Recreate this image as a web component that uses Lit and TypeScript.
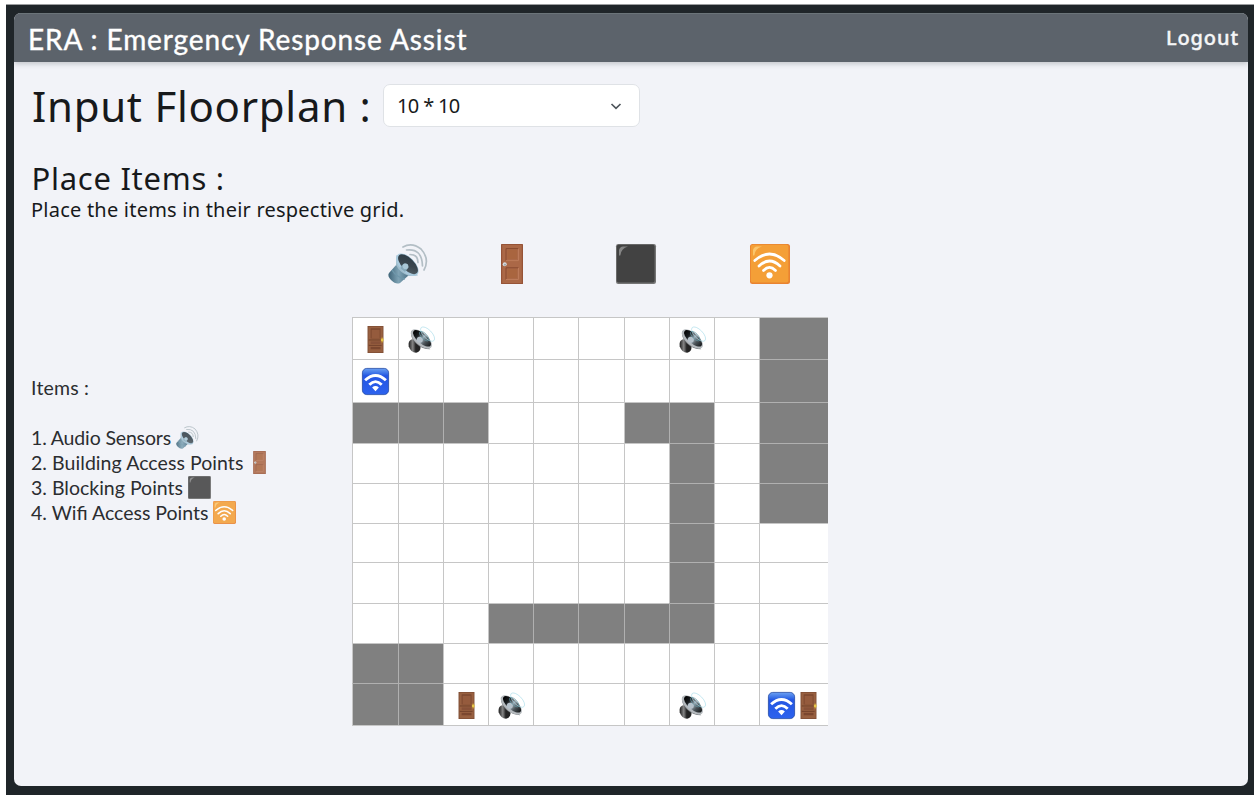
import { LitElement, html, css, svg, nothing } from "lit";
import { customElement, property } from "lit/decorators.js";

type IconName = "speaker" | "door" | "block" | "wifi" | "speakerDark" | "doorDark" | "wifiBlue";

const icons = {
  speaker: svg`
    <defs>
      <linearGradient id="cone" x1="0" y1="0" x2="1" y2="1"><stop offset="0" stop-color="#2b3a44"/><stop offset=".55" stop-color="#3a464e"/><stop offset="1" stop-color="#56636b"/></linearGradient>
      <linearGradient id="base" x1="0" y1="0" x2="1" y2="0"><stop offset="0" stop-color="#3f6478"/><stop offset=".5" stop-color="#7fa3b5"/><stop offset="1" stop-color="#4b7085"/></linearGradient>
    </defs>
    <path d="M9 20 L1 29 Q-1 32 3 36 Q8 41 12 39 L21 31Z" fill="url(#base)"/>
    <path d="M8.500 11 L8 21 Q12 29 21 32 L30 31.500Z" fill="#9fbccb"/>
    <path d="M4 26 Q8 33 17 35" fill="none" stroke="#6f97aa" stroke-width="1.500"/>
    <ellipse cx="19.300" cy="20.800" rx="14" ry="7.600" transform="rotate(45 19.300 20.800)" fill="#a9cade"/>
    <ellipse cx="20" cy="20.200" rx="12.600" ry="6.100" transform="rotate(45 20 20.200)" fill="url(#cone)"/>
    <path d="M13 25 Q11 23 16 19.500 Q20 19 20.500 23.500 L17 28Z" fill="#88aabb"/>
    <circle cx="17.500" cy="22.300" r="2.800" fill="#a9c7d6"/>
    <g fill="none" stroke="#b3bec5" stroke-width="1.700" stroke-linecap="round">
      <path d="M22 10.500 Q30 10.500 30 18.500"/><path d="M18.500 6 Q34 4 34.500 22"/><path d="M15 3 Q24 -2 33 5 Q42 15 36 26"/>
    </g>`,
  door: svg`
    <rect x="9" y="0" width="22" height="40" rx=".6" fill="#965337"/>
    <rect x="10.200" y="1" width="19.600" height="38" fill="#ab6847"/>
    <path d="M14 16.600V4.600H26.500" fill="none" stroke="#88492f" stroke-width="1"/>
    <path d="M14 16.600H26.500V4.600" fill="none" stroke="#bd7b5a" stroke-width="1"/>
    <rect x="15.500" y="6" width="9.500" height="9" fill="#a9653f"/>
    <path d="M14 35.500V23.800H26.500" fill="none" stroke="#88492f" stroke-width="1"/>
    <path d="M14 35.500H26.500V23.800" fill="none" stroke="#bd7b5a" stroke-width="1"/>
    <rect x="15.500" y="25.300" width="9.500" height="8.700" fill="#a9653f"/>
    <circle cx="12.700" cy="20.200" r="2" fill="#d5dadd"/><circle cx="13" cy="20.700" r="1" fill="#9da6aa"/>`,
  block: svg`
    <rect width="40" height="40" rx="2.200" fill="#757575"/>
    <rect x=".8" y=".8" width="37.800" height="37.800" rx="1.800" fill="#424242"/>
    <path d="M3 11.500V6Q4 2.500 7 2.500H12Q5 4.500 4.300 11.500Z" fill="#858585"/>`,
  wifi: svg`
    <rect width="40" height="40" rx="2.500" fill="#e98331"/>
    <rect x=".8" y=".8" width="37.600" height="37.600" rx="2" fill="#f49f37"/>
    <path d="M3 11.500V6Q4 2.500 7 2.500H12Q5 4.500 4.300 11.500Z" fill="#fbc56b"/>
    <g fill="none" stroke="#fff" stroke-width="2.700" stroke-linecap="round">
      <path d="M4.800 16.500Q19.500 3.500 34.200 16.500"/><path d="M9 22Q19.500 12 30 22"/><path d="M13.500 26.500Q19.500 20.500 25.500 26.500"/>
    </g>
    <circle cx="19.500" cy="31.300" r="3.100" fill="#fff"/>`,
  speakerDark: svg`
    <defs>
      <linearGradient id="darkCone" x1="0" y1="0" x2="1" y2="0"><stop offset="0" stop-color="#000"/><stop offset=".28" stop-color="#1b1f22"/><stop offset=".52" stop-color="#98a6b0"/><stop offset=".72" stop-color="#4b5358"/><stop offset="1" stop-color="#16191b"/></linearGradient>
      <linearGradient id="darkBase" x1="0" y1="0" x2="1" y2="0"><stop offset="0" stop-color="#1c1c1c"/><stop offset=".35" stop-color="#858585"/><stop offset=".6" stop-color="#242424"/><stop offset="1" stop-color="#222"/></linearGradient>
    </defs>
    <path d="M5 20 Q0 22 1 30 Q4 39 12 39.500 Q19 38 18.500 31 L10 19Z" fill="url(#darkBase)"/>
    <path d="M4.500 7 Q3 17 11 25 Q20 34 33 34.500Z" fill="#6d7275"/>
    <ellipse cx="19.800" cy="19.300" rx="19" ry="9.300" transform="rotate(41 19.800 19.300)" fill="#b4b9bd"/>
    <ellipse cx="20.800" cy="18.300" rx="16.600" ry="7.200" transform="rotate(41 20.800 18.300)" fill="url(#darkCone)"/>
    <circle cx="17.500" cy="20.500" r="4.500" fill="#b5c1ca"/>
    <g fill="none" stroke="#b0dfec" stroke-width="1"><ellipse cx="29" cy="12" rx="13.500" ry="6.300" transform="rotate(46 29 12)"/><ellipse cx="24" cy="15" rx="9" ry="4" transform="rotate(46 24 15)" stroke="#6198a6"/></g>`,
  doorDark: svg`
    <rect x="8.200" y="0" width="23.600" height="40" fill="#7d4c33"/>
    <rect x="9.500" y="1" width="21.200" height="38" fill="#986040"/>
    <rect x="12.800" y="3.400" width="14.600" height="15" fill="#7b472f"/><rect x="14.200" y="5.500" width="12" height="12.900" fill="#955b3d"/>
    <path d="M10 20.700H28M10 28.700H29" stroke="#6b3d28" stroke-width="1.300"/>
    <rect x="12.800" y="22.800" width="14.600" height="3.800" fill="#875138"/>
    <rect x="12.800" y="31" width="14.600" height="3.500" fill="#7b472f"/>
    <rect x="28.800" y="17" width="2" height="7.500" fill="#c49431"/><circle cx="30" cy="20.800" r="2.200" fill="#e5c64c"/>`,
  wifiBlue: svg`
    <defs><linearGradient id="blue" x1="0" y1="0" x2="0" y2="1"><stop offset="0" stop-color="#6ba0f2"/><stop offset=".18" stop-color="#3d74e8"/><stop offset=".28" stop-color="#2456e3"/><stop offset="1" stop-color="#2c62ee"/></linearGradient></defs>
    <rect x=".6" y=".6" width="38.800" height="38.800" rx="6.500" fill="url(#blue)" stroke="#234aa6" stroke-width="1.200"/>
    <g fill="none" stroke="#fff" stroke-width="4.200">
      <path d="M4.600 18.200Q20 3.800 35.400 18.200"/><path d="M10.800 24.800Q20 15.500 29.200 24.800"/>
    </g>
    <path d="M15 28.800Q20 24.500 25 28.800L20 34.400Z" fill="#fff"/>`,
};

@customElement("era-icon")
export class EraIcon extends LitElement {
  @property() name: IconName = "door";
  static styles = css`
    :host { display: block; flex: none; }
    svg { display: block; width: 100%; height: 100%; overflow: visible; }
  `;
  render() {
    return html`<svg viewBox="0 0 40 40" aria-hidden="true">${icons[this.name]}</svg>`;
  }
}

const plan = [
  "DS.....S.#",
  "W........#",
  "###...##.#",
  ".......#.#",
  ".......#.#",
  ".......#..",
  ".......#..",
  "...#####..",
  "##........",
  "##DS...S.B",
];

const contents: Record<string, IconName[]> = {
  D: ["doorDark"],
  S: ["speakerDark"],
  W: ["wifiBlue"],
  B: ["wifiBlue", "doorDark"],
};

@customElement("floor-grid")
export class FloorGrid extends LitElement {
  static styles = css`
    :host {
      display: grid;
      width: 476px;
      grid-template-columns: 46px 45px 45px 45px 45px 46px 45px 45px 45px 69px;
      grid-template-rows: 42px 43px 41px 40px 40px 39px 41px 40px 40px 42px;
      border-bottom: 1px solid #c6c6c6;
    }
    .cell {
      display: flex;
      align-items: center;
      justify-content: center;
      background: #fff;
      border-left: 1px solid #c6c6c6;
      border-top: 1px solid #c6c6c6;
    }
    .blocked { background: #808080; }
    .blocked.left { border-left-color: #b0b0b0; }
    .blocked.above { border-top-color: #b0b0b0; }
    .icon { width: 27px; height: 27px; margin-top: 1px; }
    .pair { margin-left: -3px; }
    .slim { margin-right: -5px; }
  `;
  render() {
    return plan.map((row, r) =>
      [...row].map((c, i) => {
        const blocked = c === "#";
        const cls = [
          "cell",
          blocked ? "blocked" : "",
          blocked && row[i - 1] === "#" ? "left" : "",
          blocked && plan[r - 1]?.[i] === "#" ? "above" : "",
        ].join(" ");
        const items = contents[c];
        return html`<div class=${cls}>${items
          ? items.map((n, k) => html`<era-icon class=${k > 0 ? "icon slim" : items.length > 1 ? "icon pair" : "icon"} name=${n}></era-icon>`)
          : nothing}</div>`;
      })
    );
  }
}

const legend: { text: string; icon: IconName; cls: string }[] = [
  { text: "1. Audio Sensors", icon: "speaker", cls: "audio" },
  { text: "2. Building Access Points", icon: "door", cls: "access" },
  { text: "3. Blocking Points", icon: "block", cls: "blocking" },
  { text: "4. Wifi Access Points", icon: "wifi", cls: "wireless" },
];

@customElement("app-root")
export class AppRoot extends LitElement {
  static styles = css`
    :host {
      display: block;
      box-sizing: border-box;
      height: 796px;
      padding: 4px 4px 1px 6px;
      background: #fff;
      color: #17191b;
      font-family: "Noto Sans", sans-serif;
    }
    * { box-sizing: border-box; }
    .frame {
      height: 791px;
      padding: 8px 6px 9px 8px;
      background: #1f2529;
      border-top: 1px solid #9b9d9f;
    }
    .panel {
      height: 773px;
      border-radius: 7px;
      background: #f2f3f8;
      overflow: hidden;
    }
    header {
      display: flex;
      justify-content: space-between;
      align-items: center;
      height: 49px;
      padding: 0 9px 0 14px;
      background: #5c636b;
      border-top: 1px solid #6b7479;
      color: #fff;
      box-shadow: 0 2px 5px #c3c6cc;
    }
    .brand {
      font: 400 28px/48px Lato, sans-serif;
      letter-spacing: 0.9px;
      padding-top: 1px;
      -webkit-text-stroke: 0.4px #fff;
    }
    .logout {
      padding-bottom: 1px;
      font-size: 20px;
      font-weight: 500;
      line-height: 28px;
      letter-spacing: 0.9px;
      color: #f5f6f7;
      -webkit-text-stroke: 0.4px #f5f6f7;
    }
    main { padding: 22px 0 0 17px; }
    .top { display: flex; align-items: center; height: 43px; }
    h1 { margin: 0; width: 352px; padding-left: 1px; font-weight: 400; font-size: 42px; line-height: 48px; letter-spacing: 0.72px; white-space: nowrap; }
    .select {
      display: flex;
      align-items: center;
      justify-content: space-between;
      width: 257px;
      height: 43px;
      padding: 0 17px 0 13px;
      border: 1px solid #dfe2e6;
      border-radius: 7px;
      background: #fff;
      font-size: 20px;
    }
    .value { letter-spacing: -0.65px; }
    .chevron { width: 12px; height: 12px; }
    h2 { margin: 33px 0 0; padding-left: 0.5px; font-weight: 400; font-size: 31px; line-height: 36px; letter-spacing: 0.72px; }
    .hint { margin: 0; font-size: 20px; line-height: 27px; letter-spacing: 0.22px; }
    .palette { display: flex; margin: 21px 0 0 357px; }
    .tool { width: 40px; height: 40px; }
    .tool.door { margin-left: 64px; }
    .tool.block { margin-left: 84px; }
    .tool.wifi { margin-left: 94px; }
    .work { display: flex; margin-top: 33px; }
    .legend { width: 321px; padding-top: 58px; color: #2b2d30; font: 400 19.500px/25px Lato, sans-serif; letter-spacing: 0.2px; }
    .heading { margin: 0 0 25px; }
    ol { margin: 0; padding: 0; list-style: none; }
    li { display: flex; align-items: center; gap: 5px; height: 25px; white-space: nowrap; }
    .audio { letter-spacing: -0.15px; }
    .access { letter-spacing: 0.06px; }
    .blocking { letter-spacing: 0; }
    .wireless { letter-spacing: 0; }
    .mark { width: 23px; height: 23px; opacity: 0.87; }
  `;
  render() {
    return html`<div class="frame"><div class="panel">
      <header><div class="brand">ERA : Emergency Response Assist</div><div class="logout">Logout</div></header>
      <main>
        <div class="top">
          <h1>Input Floorplan :</h1>
          <div class="select"><span class="value">10 * 10</span>
            <svg class="chevron" viewBox="0 0 12 12"><path d="M1.500 4 L6 8.300 L10.500 4" fill="none" stroke="#4f565c" stroke-width="1.700"/></svg>
          </div>
        </div>
        <h2>Place Items :</h2>
        <p class="hint">Place the items in their respective grid.</p>
        <div class="palette">
          ${(["speaker", "door", "block", "wifi"] as IconName[]).map((n) => html`<era-icon class="tool ${n}" name=${n}></era-icon>`)}
        </div>
        <div class="work">
          <div class="legend">
            <p class="heading">Items :</p>
            <ol>${legend.map((l) => html`<li><span class=${l.cls}>${l.text}</span><era-icon class="mark" name=${l.icon}></era-icon></li>`)}</ol>
          </div>
          <floor-grid></floor-grid>
        </div>
      </main>
    </div></div>`;
  }
}
